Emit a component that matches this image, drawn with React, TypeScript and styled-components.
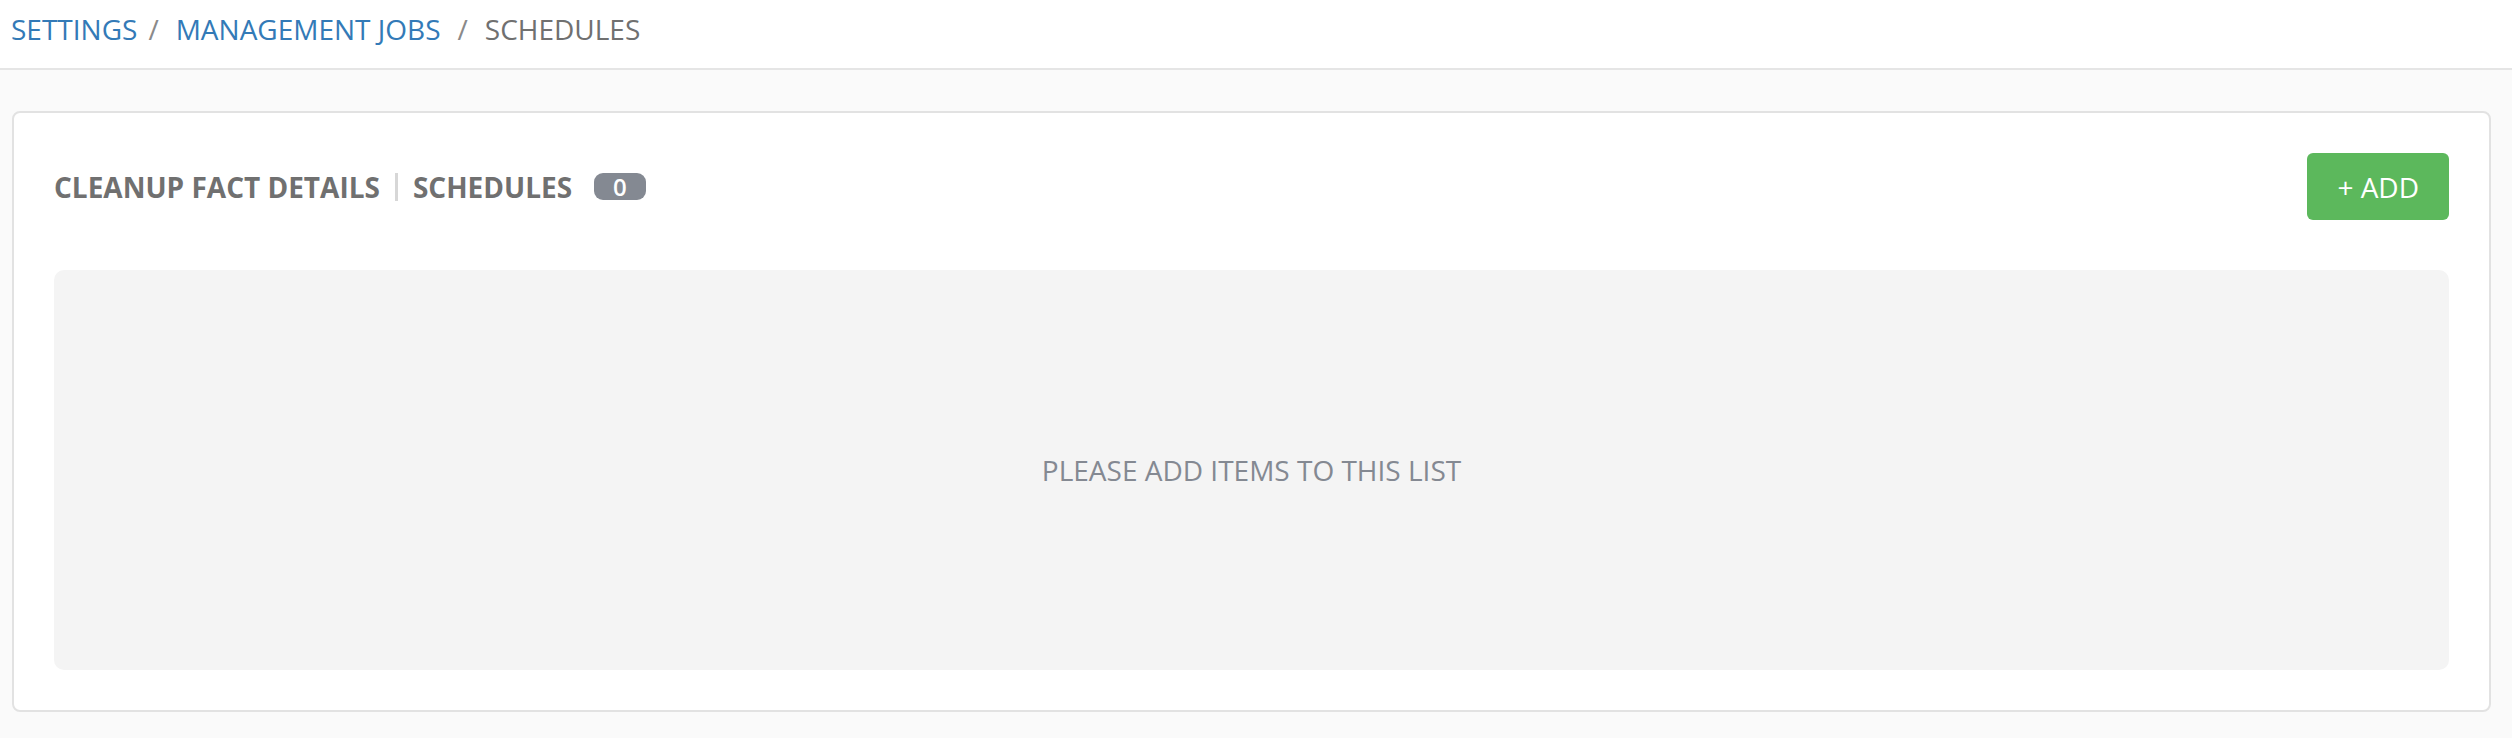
import React from 'react';
import styled, {createGlobalStyle} from 'styled-components';

const GlobalStyle = createGlobalStyle`
  html,
  body {
    margin: 0;
    padding: 0;
    background: #fafafa;
  }

  body {
    font-family: 'Open Sans', 'Liberation Sans', sans-serif;
  }
`;

const Page = styled.div`
  min-height: 100vh;
  background: #fafafa;
`;

const BreadcrumbBar = styled.nav`
  display: flex;
  align-items: flex-start;
  height: 70px;
  box-sizing: border-box;
  padding: 10px 0 0 11px;
  background: #ffffff;
  border-bottom: 2px solid #e5e5e5;
  font-size: 28px;
  line-height: 38px;
`;

const Crumb = styled.a<{$current?: boolean}>`
  color: ${props => (props.$current ? '#707070' : '#337ab7')};
  text-decoration: none;
  cursor: ${props => (props.$current ? 'default' : 'pointer')};
`;

const CrumbDivider = styled.span<{$lead?: number}>`
  padding: 0 17px 0 ${props => props.$lead ?? 11}px;
  color: #8a8a8a;
`;

const Main = styled.main`
  padding: 41px 21px 20px 12px;
`;

const Card = styled.section`
  background: #ffffff;
  border: 2px solid #e2e2e2;
  border-radius: 8px;
  padding: 40px;
`;

const CardHeader = styled.div`
  display: flex;
  align-items: center;
  justify-content: space-between;
  margin-bottom: 50px;
`;

const TitleGroup = styled.div`
  display: flex;
  align-items: center;
`;

const Title = styled.h2`
  margin: 0;
  font-size: 28px;
  font-weight: 700;
  line-height: 38px;
  color: #707070;
`;

const TitleDivider = styled.span`
  width: 3px;
  height: 28px;
  margin: 0 15px;
  background: #d7d7d7;
`;

const Badge = styled.span`
  display: inline-flex;
  align-items: center;
  justify-content: center;
  height: 27px;
  margin-left: 22px;
  padding: 0 19px;
  border-radius: 9px;
  background: #848992;
  color: #ffffff;
  font-size: 24px;
  font-weight: 600;
  line-height: 27px;
`;

const AddButton = styled.button`
  height: 67px;
  padding: 0 30px;
  border: 0;
  border-radius: 6px;
  background: #5cb85c;
  color: #ffffff;
  font-family: inherit;
  font-size: 28px;
  cursor: pointer;
`;

const EmptyList = styled.div`
  display: flex;
  align-items: center;
  justify-content: center;
  height: 400px;
  border-radius: 10px;
  background: #f4f4f4;
  color: #848992;
  font-size: 28px;
`;

interface ScheduleListProps {
  jobName: string;
  count: number;
}

function ScheduleList({jobName, count}: ScheduleListProps): JSX.Element {
  return (
    <Card>
      <CardHeader>
        <TitleGroup>
          <Title>{jobName}</Title>
          <TitleDivider />
          <Title>SCHEDULES</Title>
          <Badge>{count}</Badge>
        </TitleGroup>
        <AddButton>+ ADD</AddButton>
      </CardHeader>
      {count === 0 && <EmptyList>PLEASE ADD ITEMS TO THIS LIST</EmptyList>}
    </Card>
  );
}

export default function App(): JSX.Element {
  return (
    <Page>
      <GlobalStyle />
      <BreadcrumbBar>
        <Crumb>SETTINGS</Crumb>
        <CrumbDivider>/</CrumbDivider>
        <Crumb>MANAGEMENT JOBS</Crumb>
        <CrumbDivider $lead={17}>/</CrumbDivider>
        <Crumb $current>SCHEDULES</Crumb>
      </BreadcrumbBar>
      <Main>
        <ScheduleList jobName="CLEANUP FACT DETAILS" count={0} />
      </Main>
    </Page>
  );
}
